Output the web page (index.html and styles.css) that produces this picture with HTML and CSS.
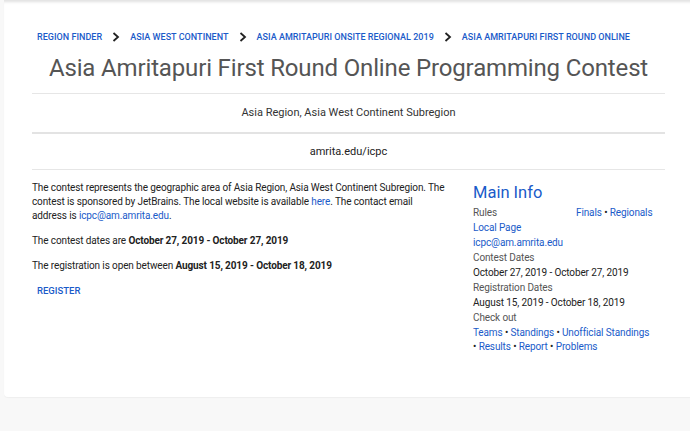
FILE: index.html
```html
<!DOCTYPE html>
<html>
<head>
<meta charset="utf-8">
<link rel="stylesheet" href="styles.css">
</head>
<body>
<div class="page">
  <main class="card">
    <div class="container">
      <nav class="crumbs">
        <a href="#">Region Finder</a>
        <span class="sep"><svg width="8" height="10" viewBox="0 0 8 10"><path d="M1.5 1 L6 5 L1.5 9" fill="none" stroke="#222" stroke-width="1.8"/></svg></span>
        <a href="#">Asia West Continent</a>
        <span class="sep"><svg width="8" height="10" viewBox="0 0 8 10"><path d="M1.5 1 L6 5 L1.5 9" fill="none" stroke="#222" stroke-width="1.8"/></svg></span>
        <a href="#">Asia Amritapuri Onsite Regional 2019</a>
        <span class="sep"><svg width="8" height="10" viewBox="0 0 8 10"><path d="M1.5 1 L6 5 L1.5 9" fill="none" stroke="#222" stroke-width="1.8"/></svg></span>
        <a href="#">Asia Amritapuri First Round Online</a>
      </nav>
      <h1 class="title">Asia Amritapuri First Round Online Programming Contest</h1>
      <div class="band">Asia Region, Asia West Continent Subregion</div>
      <div class="band band-site">amrita.edu/icpc</div>
      <div class="cols">
        <section class="main">
          <p>The contest represents the geographic area of Asia Region, Asia West Continent Subregion. The contest is sponsored by JetBrains. The local website is available <a href="#">here</a>. The contact email address is <a href="#">icpc@am.amrita.edu</a>.</p>
          <p>The contest dates are <b>October 27, 2019 - October 27, 2019</b></p>
          <p>The registration is open between <b>August 15, 2019 - October 18, 2019</b></p>
          <a class="btn" href="#">Register</a>
        </section>
        <aside class="info">
          <h2>Main Info</h2>
          <div class="row"><span class="label">Rules</span><span class="links"><a href="#">Finals</a> • <a href="#">Regionals</a></span></div>
          <div class="line"><a href="#">Local Page</a></div>
          <div class="line"><a href="#">icpc@am.amrita.edu</a></div>
          <div class="line label">Contest Dates</div>
          <div class="line value">October 27, 2019 - October 27, 2019</div>
          <div class="line label">Registration Dates</div>
          <div class="line value">August 15, 2019 - October 18, 2019</div>
          <div class="line label">Check out</div>
          <div class="line"><a href="#">Teams</a> • <a href="#">Standings</a> • <a href="#">Unofficial Standings</a></div>
          <div class="line tight">• <a href="#">Results</a> • <a href="#">Report</a> • <a href="#">Problems</a></div>
        </aside>
      </div>
    </div>
  </main>
</div>
</body>
</html>
```

FILE: styles.css
```css
html, body {
  margin: 0;
  padding: 0;
}
body {
  background: #f8f8f8;
  font-family: Roboto, "Liberation Sans", sans-serif;
  color: #222;
  height: 431px;
  overflow: hidden;
}
.page {
  padding-left: 4px;
}
.card {
  background: #fff;
  border-radius: 0 0 0 4px;
  box-shadow: inset 0 4px 3px -2px rgba(0, 0, 0, 0.12), 0 1px 1px rgba(0, 0, 0, 0.04);
  height: 397px;
  width: 720px;
  box-sizing: border-box;
  padding: 26px 0 0 28px;
}
.container {
  width: 633px;
}
a {
  color: #1a5bc9;
  text-decoration: none;
}
.crumbs {
  display: flex;
  align-items: center;
  gap: 10px;
  padding-left: 5px;
  height: 21px;
  white-space: nowrap;
}
.crumbs a {
  font-size: 9px;
  font-weight: 500;
  text-transform: uppercase;
  letter-spacing: 0.03px;
}
.sep {
  display: flex;
  align-items: center;
}
.title {
  margin: 4px 0 0;
  font-size: 24px;
  font-weight: 400;
  color: #555;
  text-align: center;
  line-height: 34px;
  height: 42px;
  letter-spacing: -0.15px;
  white-space: nowrap;
}
.band {
  border-top: 1px solid #e6e6e6;
  text-align: center;
  font-size: 11px;
  color: #333;
  height: 38px;
  line-height: 38px;
}
.band-site {
  border-top: 2px solid #e3e3e3;
  border-bottom: 1px solid #e6e6e6;
  height: 35px;
  line-height: 36px;
  color: #222;
}
.cols {
  display: grid;
  grid-template-columns: 422px 1fr;
}
.main {
  padding-top: 11px;
  font-size: 10px;
  letter-spacing: -0.12px;
  color: #222;
}
.main p {
  margin: 0 0 11px;
  line-height: 14px;
  padding-right: 8px;
}
.main b {
  font-weight: 700;
}
.btn {
  display: inline-block;
  margin-left: 5px;
  font-size: 9.5px;
  font-weight: 500;
  letter-spacing: 0;
  text-transform: uppercase;
  line-height: 14px;
}
.info {
  padding: 11px 0 0 19px;
  font-size: 10px;
  letter-spacing: -0.12px;
}
.info h2 {
  margin: 0;
  font-size: 16.5px;
  font-weight: 400;
  color: #1a5bc9;
  line-height: 24px;
  letter-spacing: 0;
}
.row {
  display: grid;
  grid-template-columns: 103px 1fr;
  line-height: 15px;
}
.label {
  color: #555;
}
.line {
  line-height: 15px;
}
.value {
  color: #222;
}
.tight {
  line-height: 14px;
}
```
